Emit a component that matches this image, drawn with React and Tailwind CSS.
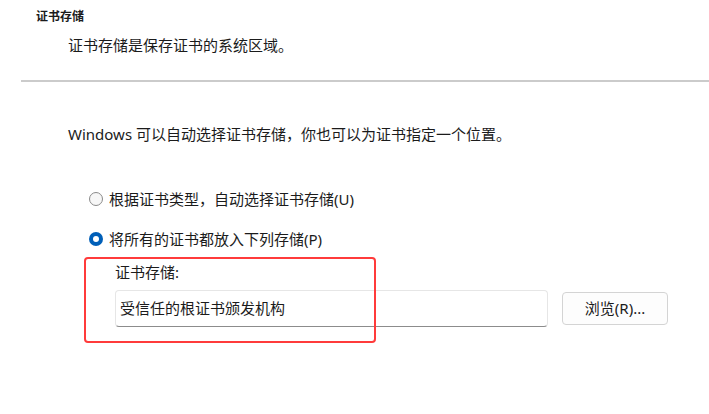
import React from 'react';

const Radio = ({ checked, label }) => (
    <div className="flex items-center h-[20px] pl-[89px]">
        {checked ? (
            <span className="w-[14px] h-[14px] rounded-full bg-[#005fb8] flex items-center justify-center">
                <span className="w-[6px] h-[6px] rounded-full bg-white"></span>
            </span>
        ) : (
            <span className="w-[14px] h-[14px] rounded-full border border-[#8a8a8a] bg-[#f7f7f7]"></span>
        )}
        <span className="ml-[6px] text-[15px] leading-[20px] text-[#1b1b1b]">{label}</span>
    </div>
);

const App = () => {
    return (
        <div
            className="relative w-[709px] h-[414px] bg-white overflow-hidden text-[#1b1b1b]"
            style={{ fontFamily: '"Noto Sans", "Noto Sans CJK SC", sans-serif' }}
        >
            {/* Header */}
            <div className="pt-[9px] pl-[36px] text-[12px] leading-[16px] font-bold">证书存储</div>
            <div className="mt-[10px] pl-[68px] text-[15px] leading-[20px]">证书存储是保存证书的系统区域。</div>

            {/* Divider */}
            <div className="mt-[25px] ml-[21px] h-[2px] bg-[#cbcbcb]"></div>

            {/* Body */}
            <div className="mt-[42px] pl-[68px] text-[15px] leading-[20px]">
                Windows 可以自动选择证书存储，你也可以为证书指定一个位置。
            </div>

            <div className="mt-[45px]">
                <Radio label="根据证书类型，自动选择证书存储(U)" />
            </div>
            <div className="mt-[20px]">
                <Radio checked label="将所有的证书都放入下列存储(P)" />
            </div>

            <div className="mt-[13px] pl-[115px] text-[15px] leading-[20px]">证书存储:</div>
            <div className="mt-[8px] pl-[115px] flex items-center gap-[14px]">
                <div className="w-[433px] h-[37px] rounded-[4px] border border-[#e6e6e6] border-b-[#8c8c8c] bg-white pl-[4px] flex items-center text-[15px]">
                    受信任的根证书颁发机构
                </div>
                <button className="w-[106px] h-[33px] rounded-[4px] border border-[#d4d4d4] bg-[#fdfdfd] text-[15px] flex items-center justify-center">
                    浏览(R)...
                </button>
            </div>

            {/* Red highlight annotation */}
            <div className="absolute left-[84px] top-[257px] w-[292px] h-[86px] border-2 border-[#ff3b3b] rounded-[4px]"></div>
        </div>
    );
};

export default App;
